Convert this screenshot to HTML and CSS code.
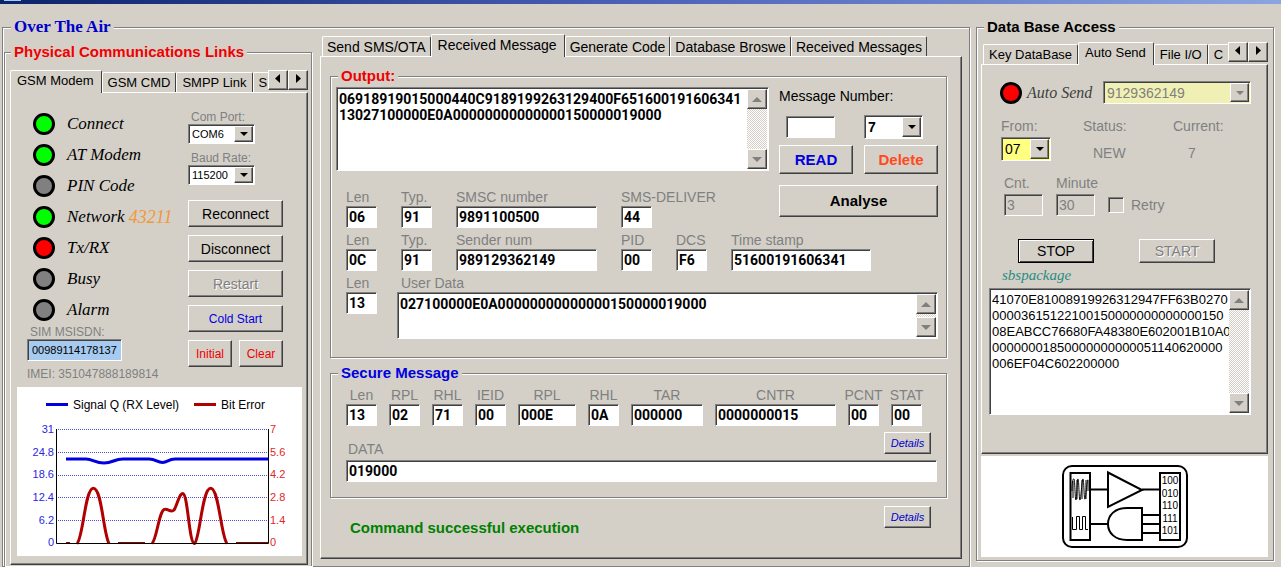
FILE: index.html
```
<!DOCTYPE html>
<html lang="en">
<head>
    <meta charset="UTF-8">
    <meta name="viewport" content="width=device-width, initial-scale=1.0">
    <title>Over The Air</title>
    <link rel="stylesheet" href="styles.css">
</head>
<body>
    <div class="titlebar"><span class="titlebar-icon"></span></div>
    <main class="app">
        <fieldset class="group ota">
            <legend class="legend-ota">Over The Air</legend>

            <fieldset class="group links">
                <legend class="legend-red">Physical Communications Links</legend>
                <div class="tabs tabs-small">
                    <div class="tab-list" role="tablist">
                        <button class="tab selected" role="tab">GSM Modem</button>
                        <button class="tab" role="tab">GSM CMD</button>
                        <button class="tab" role="tab">SMPP Link</button>
                        <button class="tab" role="tab">S</button>
                    </div>
                    <button class="spin" aria-label="Scroll tabs left"><svg width="8" height="10"><path d="M6 0v9L1 4.500z"/></svg></button>
                    <button class="spin" aria-label="Scroll tabs right"><svg width="8" height="10"><path d="M2 0v9l5-4.500z"/></svg></button>
                </div>
                <div class="page">
                    <div class="modem">
                        <div class="modem-status">
                            <ul class="led-list">
                                <li><span class="led green"></span>Connect</li>
                                <li><span class="led green"></span>AT Modem</li>
                                <li><span class="led"></span>PIN Code</li>
                                <li><span class="led green"></span>Network <span class="network-id">43211</span></li>
                                <li><span class="led red"></span>Tx/RX</li>
                                <li><span class="led"></span>Busy</li>
                                <li><span class="led"></span>Alarm</li>
                            </ul>
                            <label class="small-label" for="msisdn">SIM MSISDN:</label>
                            <input class="msisdn" id="msisdn" type="text" value="00989114178137">
                            <p class="imei">IMEI: 351047888189814</p>
                        </div>
                        <div class="modem-actions">
                            <label class="small-label" for="com-port">Com Port:</label>
                            <div class="combo combo-small">
                                <select id="com-port"><option>COM6</option></select><span class="arrow"></span>
                            </div>
                            <label class="small-label" for="baud-rate">Baud Rate:</label>
                            <div class="combo combo-small">
                                <select id="baud-rate"><option>115200</option></select><span class="arrow"></span>
                            </div>
                            <div class="modem-buttons">
                                <button class="btn wide">Reconnect</button>
                                <button class="btn wide">Disconnect</button>
                                <button class="btn wide" disabled>Restart</button>
                                <button class="btn wide small blue">Cold Start</button>
                                <button class="btn small red-text">Initial</button>
                                <button class="btn small red-text">Clear</button>
                            </div>
                        </div>
                    </div>
                    <svg class="chart" viewBox="0 0 285 169" role="img" aria-label="Signal quality and bit error">
                        <g class="chart-legend">
                            <path class="signal" d="M29 17.500h22"/>
                            <text x="56" y="22">Signal Q (RX Level)</text>
                            <path class="error" d="M177 17.500h22"/>
                            <text x="204" y="22">Bit Error</text>
                        </g>
                        <path class="grid" d="M41 42.500H250M41 65.500H250M41 88.500H250M41 110.500H250M41 133.500H250"/>
                        <g class="axis-signal">
                            <text x="37" y="46">31</text>
                            <text x="37" y="69">24.8</text>
                            <text x="37" y="91">18.6</text>
                            <text x="37" y="114">12.4</text>
                            <text x="37" y="137">6.2</text>
                            <text x="37" y="159">0</text>
                        </g>
                        <g class="axis-error">
                            <text x="253" y="46">7</text>
                            <text x="253" y="69">5.6</text>
                            <text x="253" y="91">4.2</text>
                            <text x="253" y="114">2.8</text>
                            <text x="253" y="137">1.4</text>
                            <text x="253" y="159">0</text>
                        </g>
                        <path class="error" d="M60 156.500C66 152 68 101.300 76.300 101.300C85 101.300 86 145 92 156.500M135 156.500C140 152 142 122.500 148 122.300C152 122 154 126 157 123C160 119 162 106.500 166 106.600C171 108 172 156.500 177.500 156.500C183 152 185 101.300 193.700 101.300C202 101.300 204 150 210 156.500"/>
                        <path class="error-base" d="M49 156H53M60 156H61M101 156H128M219 156H251"/>
                        <path class="signal" d="M49 72H69C76 72 78 76 87 76C96 76 97 72 106 72H132C139 72 140 75.500 145.500 75.500C151 75.500 151 72 158 72H251"/>
                        <path class="axis" d="M39.500 42V156.500H251.500V42"/>
                    </svg>
                </div>
            </fieldset>

            <section class="messages">
                <div class="tabs tabs-indent">
                    <div class="tab-list" role="tablist">
                        <button class="tab" role="tab">Send SMS/OTA</button>
                        <button class="tab selected" role="tab">Received Message</button>
                        <button class="tab" role="tab">Generate Code</button>
                        <button class="tab" role="tab">Database Broswe</button>
                        <button class="tab" role="tab">Received Messages</button>
                    </div>
                </div>
                <div class="page message-page">
                    <fieldset class="group output">
                        <legend class="legend-inner red-text">Output:</legend>
                        <div class="output-top">
                            <div>
                                <div class="memo memo-output">
                                    <textarea aria-label="Output">06918919015000440C9189199263129400F651600191606341
13027100000E0A00000000000000150000019000</textarea>
                                    <div class="scroll"><span class="scroll-btn up"></span><span class="scroll-btn down"></span></div>
                                </div>
                                <div class="fields sms-fields">
                                    <div class="field"><label for="smsc-len">Len</label><input id="smsc-len" type="text" value="06"></div>
                                    <div class="field"><label for="smsc-typ">Typ.</label><input id="smsc-typ" type="text" value="91"></div>
                                    <div class="field"><label for="smsc">SMSC number</label><input id="smsc" type="text" value="9891100500"></div>
                                    <div class="field"><label for="deliver">SMS-DELIVER</label><input id="deliver" type="text" value="44"></div>
                                </div>
                            </div>
                            <div class="reader">
                                <label class="reader-label" for="msg-number">Message Number:</label>
                                <div class="reader-number"><input id="msg-number" type="text"></div>
                                <div class="combo combo-number">
                                    <select aria-label="Message slot"><option>7</option></select><span class="arrow"></span>
                                </div>
                                <button class="btn bold blue">READ</button>
                                <button class="btn bold orange">Delete</button>
                                <button class="btn bold analyse">Analyse</button>
                            </div>
                        </div>
                        <div class="fields sms-fields">
                            <div class="field"><label for="sender-len">Len</label><input id="sender-len" type="text" value="0C"></div>
                            <div class="field"><label for="sender-typ">Typ.</label><input id="sender-typ" type="text" value="91"></div>
                            <div class="field"><label for="sender">Sender num</label><input id="sender" type="text" value="989129362149"></div>
                            <div class="field"><label for="pid">PID</label><input id="pid" type="text" value="00"></div>
                            <div class="field"><label for="dcs">DCS</label><input id="dcs" type="text" value="F6"></div>
                            <div class="field"><label for="stamp">Time stamp</label><input id="stamp" type="text" value="51600191606341"></div>
                        </div>
                        <div class="fields user-fields">
                            <div class="field"><label for="data-len">Len</label><input id="data-len" type="text" value="13"></div>
                            <div class="field">
                                <label class="user-label" for="user-data">User Data</label>
                                <div class="memo memo-user">
                                    <textarea id="user-data">027100000E0A00000000000000150000019000</textarea>
                                    <div class="scroll"><span class="scroll-btn up"></span><span class="scroll-btn down"></span></div>
                                </div>
                            </div>
                        </div>
                    </fieldset>

                    <fieldset class="group secure">
                        <legend class="legend-inner blue">Secure Message</legend>
                        <div class="fields secure-fields">
                            <div class="field"><label for="s-len">Len</label><input id="s-len" type="text" value="13"></div>
                            <div class="field"><label for="s-rpl">RPL</label><input id="s-rpl" type="text" value="02"></div>
                            <div class="field"><label for="s-rhl">RHL</label><input id="s-rhl" type="text" value="71"></div>
                            <div class="field"><label for="s-ieid">IEID</label><input id="s-ieid" type="text" value="00"></div>
                            <div class="field"><label for="s-rpl2">RPL</label><input id="s-rpl2" type="text" value="000E"></div>
                            <div class="field"><label for="s-rhl2">RHL</label><input id="s-rhl2" type="text" value="0A"></div>
                            <div class="field"><label for="s-tar">TAR</label><input id="s-tar" type="text" value="000000"></div>
                            <div class="field"><label for="s-cntr">CNTR</label><input id="s-cntr" type="text" value="0000000015"></div>
                            <div class="field"><label for="s-pcnt">PCNT</label><input id="s-pcnt" type="text" value="00"></div>
                            <div class="field"><label for="s-stat">STAT</label><input id="s-stat" type="text" value="00"></div>
                        </div>
                        <div class="data-head">
                            <label for="s-data">DATA</label>
                            <button class="btn details">Details</button>
                        </div>
                        <div class="data-row"><input id="s-data" type="text" value="019000"></div>
                    </fieldset>

                    <div class="result">
                        <p>Command successful execution</p>
                        <button class="btn details">Details</button>
                    </div>
                </div>
            </section>
        </fieldset>

        <fieldset class="group database">
            <legend class="legend-db">Data Base Access</legend>
            <div class="tabs tabs-small tabs-indent">
                <div class="tab-list" role="tablist">
                    <button class="tab" role="tab">Key DataBase</button>
                    <button class="tab selected" role="tab">Auto Send</button>
                    <button class="tab" role="tab">File I/O</button>
                    <button class="tab" role="tab">C</button>
                </div>
                <button class="spin" aria-label="Scroll tabs left"><svg width="8" height="10"><path d="M6 0v9L1 4.500z"/></svg></button>
                <button class="spin" aria-label="Scroll tabs right"><svg width="8" height="10"><path d="M2 0v9l5-4.500z"/></svg></button>
            </div>
            <div class="page send-page">
                <div class="auto-send">
                    <span class="led red"></span>
                    <label for="auto-number">Auto Send</label>
                    <div class="combo combo-disabled">
                        <select id="auto-number" disabled><option>9129362149</option></select><span class="arrow"></span>
                    </div>
                </div>
                <div class="send-status">
                    <label for="from">From:</label>
                    <span>Status:</span>
                    <span>Current:</span>
                    <div class="combo combo-from">
                        <select id="from"><option>07</option></select><span class="arrow"></span>
                    </div>
                    <output class="state">NEW</output>
                    <output class="current">7</output>
                </div>
                <div class="timing">
                    <div class="timing-field"><label for="cnt">Cnt.</label><input id="cnt" type="text" value="3" disabled></div>
                    <div class="timing-field"><label for="minute">Minute</label><input id="minute" type="text" value="30" disabled></div>
                    <label class="retry"><input type="checkbox" disabled>Retry</label>
                </div>
                <div class="send-buttons">
                    <button class="btn default">STOP</button>
                    <button class="btn" disabled>START</button>
                </div>
                <label class="package-label" for="package">sbspackage</label>
                <div class="memo memo-package">
                    <textarea id="package">41070E81008919926312947FF63B0270
00003615122100150000000000000150
08EABCC76680FA48380E602001B10A0
00000001850000000000051140620000
006EF04C602200000</textarea>
                    <div class="scroll"><span class="scroll-btn up"></span><span class="scroll-btn down"></span></div>
                </div>
            </div>
            <div class="logo">
                <svg width="126" height="84" viewBox="0 0 126 84" role="img" aria-label="Modem logo">
                    <rect class="card" x="1" y="1" width="124" height="81" rx="9"/>
                    <path class="frame" d="M8.500 8H28V75H8.500zM98 8H118V75H98z"/>
                    <path class="gate" d="M46 7.500L80 25L46 42zM80 43H65C53 43 46 50 46 59S53 75 65 75H80z"/>
                    <path class="wire" d="M28 24.500H46M80 24.500H98M28 59H46M80 50H98M80 59H98M80 68H98"/>
                    <path class="wave" d="M10 26C10 17 11 13 12 14S13 36 14 35S15 13 16 14S17 36 18 35S20 13 21 14S22 36 23 34S25 13 26 15V26M11 16V33M15 15V34M20 15V34M24 15V34"/>
                    <path class="square" d="M10.500 52V64.500H14.500V51.500H17.500V64.500H20.500V51.500H23.500V64.500H26"/>
                    <g class="bits">
                        <text x="108" y="19">100</text>
                        <text x="108" y="32">010</text>
                        <text x="108" y="44">110</text>
                        <text x="108" y="57">111</text>
                        <text x="108" y="69">101</text>
                    </g>
                </svg>
            </div>
        </fieldset>
    </main>
</body>
</html>
```
FILE: styles.css
```
* {
    box-sizing: border-box;
}
body {
    margin: 0;
    min-height: 100vh;
    display: flex;
    flex-direction: column;
    background: #d4d0c8;
    color: #000;
    font-family: "Liberation Sans", Arial, sans-serif;
    font-size: 14px;
    line-height: 14px;
}
button, input, select, textarea {
    font: inherit;
    color: inherit;
    margin: 0;
    padding: 0;
    border-radius: 0;
}
p, ul {
    margin: 0;
    padding: 0;
}
.titlebar {
    height: 4px;
    padding-left: 4px;
    background: linear-gradient(to right, #0a246a, #4a62b8 50%, #8aa6e0);
}
.titlebar-icon {
    display: block;
    width: 17px;
    height: 1px;
    background: #a6caf0;
}
.app {
    flex: 1;
    display: grid;
    grid-template-columns: minmax(0, 1fr) 298px;
    gap: 6px;
    padding: 15px 7px 0 2px;
}

/* group boxes */
.group {
    margin: 0;
    min-width: 0;
    border: 1px solid #808080;
    box-shadow: 1px 1px 0 #fff, inset 1px 1px 0 #fff;
}
.group > legend {
    background: #d4d0c8;
    padding: 0 3px;
    font-weight: bold;
}
.ota {
    display: flex;
    gap: 8px;
    padding: 0 7px 0 1px;
}
.group > .legend-ota {
    margin-left: 7px;
    font-family: "Liberation Serif", serif;
    font-size: 17px;
    line-height: 16px;
    color: #00c;
}
.group > .legend-red {
    margin-left: 1px;
    font-size: 15px;
    line-height: 16px;
    color: #f00000;
}
.group > .legend-db {
    margin-left: 3px;
    font-size: 15px;
    line-height: 16px;
}
.group > .legend-inner {
    margin-left: 2px;
    font-size: 15px;
}
.links {
    display: flex;
    flex-direction: column;
    flex: none;
    width: 308px;
    margin-top: 9px;
    padding: 10px 3px 1px 5px;
    border-bottom: none;
}

/* tabs */
.tabs {
    display: flex;
    align-items: flex-start;
    height: 23px;
    margin-bottom: -1px;
}
.tabs-small {
    font-size: 13px;
}
.tabs-indent {
    padding-left: 2px;
}
.tab-list {
    flex: 1;
    min-width: 0;
    display: flex;
    align-items: flex-end;
    height: 23px;
    overflow: hidden;
}
.tab {
    flex: none;
    height: 20px;
    margin-bottom: 1px;
    padding: 0 4px;
    border: 1px solid;
    border-color: #fff #404040 transparent #fff;
    border-bottom: none;
    border-radius: 2px 2px 0 0;
    background: #d4d0c8;
}
.tabs-small .tab {
    padding: 0 5px;
}
.tab.selected {
    position: relative;
    height: 23px;
    margin-bottom: 0;
    padding: 0 7px 2px 6px;
}
.spin {
    flex: none;
    width: 20px;
    height: 20px;
    border: 1px solid;
    border-color: #fff #404040 #404040 #fff;
    box-shadow: inset -1px -1px 0 #808080;
    background: #d4d0c8;
}
.page {
    flex: 1;
    border: 1px solid;
    border-color: #fff #404040 #404040 #fff;
    box-shadow: inset -1px -1px 0 #808080;
}

/* buttons */
.btn {
    height: 27px;
    border: 1px solid;
    border-color: #fff #404040 #404040 #fff;
    box-shadow: inset -1px -1px 0 #808080;
    background: #d4d0c8;
    color: #000;
    white-space: nowrap;
}
.btn:disabled {
    color: #808080;
    text-shadow: 1px 1px 0 #fff;
}
.btn.small {
    font-size: 12px;
}
.btn.bold {
    height: 29px;
    font-size: 15px;
    font-weight: bold;
}
.btn.details {
    width: 47px;
    height: 22px;
    font-size: 11px;
    font-style: italic;
    color: #00c;
}
.btn.default {
    border-color: #000;
    box-shadow: inset 1px 1px 0 #fff, inset -1px -1px 0 #404040;
}
.btn.blue, .group > .blue {
    color: #0000e0;
}
.btn.orange {
    color: #ff4a1c;
}
.btn.red-text, .group > .red-text {
    color: #f00000;
}

/* text boxes */
input[type="text"] {
    display: block;
    width: 100%;
    height: 22px;
    padding: 0 2px;
    border: 1px solid;
    border-color: #808080 #fff #fff #808080;
    box-shadow: inset 1px 1px 0 #404040;
    background: #fff;
    font-family: Roboto, "Liberation Sans", sans-serif;
    font-weight: bold;
}
input[type="text"]:disabled {
    background: #d4d0c8;
    color: #808080;
    font-weight: normal;
}
.combo {
    display: flex;
    border: 1px solid;
    border-color: #808080 #fff #fff #808080;
    box-shadow: inset 1px 1px 0 #404040;
    background: #fff;
    padding: 1px;
}
.combo select {
    appearance: none;
    flex: 1;
    min-width: 0;
    padding: 0 2px;
    border: none;
    background: transparent;
    opacity: 1;
}
.arrow {
    flex: none;
    display: flex;
    align-items: center;
    justify-content: center;
    width: 19px;
    border: 1px solid;
    border-color: #fff #404040 #404040 #fff;
    box-shadow: inset -1px -1px 0 #808080;
    background: #d4d0c8;
}
.arrow::before {
    content: '';
    border: 4px solid transparent;
    border-top-color: #000;
    border-bottom: none;
}
.memo {
    display: flex;
    border: 1px solid;
    border-color: #808080 #fff #fff #808080;
    box-shadow: inset 1px 1px 0 #404040;
    background: #fff;
    padding: 1px;
}
.memo textarea {
    flex: 1;
    min-width: 0;
    padding: 2px 0 0 1px;
    border: none;
    resize: none;
    overflow: hidden;
    white-space: pre;
    background: transparent;
    line-height: 16px;
    font-family: Roboto, "Liberation Sans", sans-serif;
    font-weight: bold;
}
.scroll {
    flex: none;
    display: flex;
    flex-direction: column;
    justify-content: space-between;
    width: 20px;
    background: repeating-conic-gradient(#fff 0 25%, #d4d0c8 0 50%) 0 0 / 2px 2px;
}
.scroll-btn {
    display: flex;
    align-items: center;
    justify-content: center;
    height: 20px;
    border: 1px solid;
    border-color: #fff #404040 #404040 #fff;
    box-shadow: inset -1px -1px 0 #808080;
    background: #d4d0c8;
}
.scroll-btn::before {
    content: '';
    border: 5px solid transparent;
}
.up::before {
    border-bottom-color: #808080;
    border-top: none;
}
.down::before {
    border-top-color: #808080;
    border-bottom: none;
}

/* modem page */
.modem {
    display: flex;
    justify-content: space-between;
    padding: 15px 24px 6px 16px;
}
.led-list {
    list-style: none;
    padding-left: 6px;
    font-family: "Liberation Serif", serif;
    font-size: 17px;
    font-style: italic;
}
.led-list li {
    display: flex;
    align-items: center;
    height: 31px;
    white-space: pre;
}
.led {
    flex: none;
    width: 22px;
    height: 22px;
    margin-right: 12px;
    border: 3px solid #000;
    border-radius: 50%;
    background: #808080;
}
.led.green {
    background: #00ff00;
}
.led.red {
    background: #ff0000;
}
.network-id {
    font-size: 18px;
    color: #f0983c;
}
.small-label {
    display: block;
    padding-left: 3px;
    font-size: 12px;
    color: #808080;
}
.modem-status .msisdn {
    width: 95px;
    padding: 0 4px;
    background: #a6caf0;
    font-family: "Liberation Sans", Arial, sans-serif;
    font-size: 11px;
    font-weight: normal;
}
.imei {
    padding-top: 6px;
    font-size: 12px;
    color: #808080;
}
.modem-actions {
    width: 95px;
    padding-top: 2px;
}
.combo-small {
    width: 67px;
    height: 20px;
    margin-bottom: 7px;
    font-size: 11px;
}
.modem-buttons {
    display: grid;
    grid-template-columns: 1fr 1fr;
    gap: 8px 7px;
    padding-top: 8px;
}
.modem-buttons .wide {
    grid-column: span 2;
}
.chart {
    display: block;
    margin: 0 5px 0 6px;
    background: #fff;
}
.chart path {
    fill: none;
}
.chart .signal {
    stroke: #0000e0;
    stroke-width: 3;
}
.chart .error {
    stroke: #b00000;
    stroke-width: 3;
}
.chart .error-base {
    stroke: #900000;
    stroke-width: 2;
}
.chart .grid {
    stroke: #5050e0;
    stroke-dasharray: 1 1;
}
.chart .axis {
    stroke: #000;
}
.chart-legend {
    font-size: 12px;
}
.axis-signal {
    font-size: 11px;
    fill: #2828e0;
    text-anchor: end;
}
.axis-error {
    font-size: 11px;
    fill: #e02828;
}

/* received message page */
.messages {
    flex: 1;
    min-width: 0;
    display: flex;
    flex-direction: column;
    padding-bottom: 7px;
    margin-top: -1px;
}
.message-page {
    padding: 12px 14px 0 9px;
}
.output {
    padding: 4px 8px 18px 5px;
}
.output-top {
    display: grid;
    grid-template-columns: minmax(0, 1fr) 159px;
    gap: 10px;
}
.memo-output {
    height: 84px;
    margin-bottom: 19px;
}
.fields {
    display: grid;
    padding-left: 10px;
    color: #808080;
}
.sms-fields {
    grid-template-columns: 31px 31px 141px 31px 31px 140px;
    gap: 24px;
    margin-bottom: 5px;
}
.output-top .sms-fields {
    grid-template-columns: 31px 31px 141px 31px;
}
.user-fields {
    grid-template-columns: 31px minmax(0, 1fr);
    gap: 20px;
}
.secure-fields {
    grid-template-columns: repeat(4, 31px) 58px 31px 72px 121px 31px 31px;
    gap: 12px;
}
.field {
    min-width: 0;
}
.field label {
    display: flex;
    margin-bottom: 2px;
    white-space: nowrap;
}
.secure-fields label {
    justify-content: center;
}
.field input, .field textarea, .data-row input {
    color: #000;
}
.field .user-label {
    padding-left: 4px;
}
.memo-user {
    height: 47px;
}
.reader {
    display: grid;
    grid-template-columns: 74px 74px;
    justify-content: space-between;
    align-content: start;
    row-gap: 6px;
    padding-top: 2px;
}
.reader-label {
    grid-column: span 2;
    margin-bottom: 6px;
}
.reader-number {
    padding: 1px 18px 0 7px;
}
.combo-number {
    width: 59px;
    height: 24px;
    font-weight: bold;
}
.btn.analyse {
    grid-column: span 2;
    height: 32px;
    margin-top: 5px;
}
.secure {
    margin-top: 8px;
    padding: 8px 9px 15px 5px;
}
.data-head {
    display: flex;
    justify-content: space-between;
    height: 24px;
    margin: 6px 6px 4px 12px;
}
.data-head label {
    align-self: flex-end;
    color: #808080;
}
.data-row {
    padding-left: 10px;
}
.result {
    display: flex;
    justify-content: space-between;
    padding: 8px 16px 0 20px;
}
.result p {
    padding-top: 15px;
    font-size: 15px;
    font-weight: bold;
    color: #008000;
}

/* data base access */
.database {
    display: flex;
    flex-direction: column;
    margin-bottom: 6px;
    padding: 7px 5px 3px 4px;
}
.send-page {
    padding: 16px 16px 0 7px;
    color: #808080;
}
.auto-send {
    display: flex;
    align-items: center;
    padding-left: 11px;
}
.auto-send .led {
    margin-right: 5px;
}
.auto-send label {
    font-family: "Liberation Serif", serif;
    font-size: 16px;
    font-style: italic;
    color: #404040;
}
.combo-disabled {
    width: 148px;
    height: 23px;
    margin-left: auto;
    background: #f0f0b4;
}
.combo-disabled .arrow::before {
    border-top-color: #808080;
}
.send-status {
    display: grid;
    grid-template-columns: 82px 90px 1fr;
    row-gap: 4px;
    padding: 15px 0 0 12px;
}
.combo-from {
    width: 50px;
    height: 24px;
    background: #ffff80;
    color: #000;
}
.state {
    padding: 9px 0 0 10px;
}
.current {
    padding: 9px 0 0 15px;
}
.timing {
    display: flex;
    gap: 13px;
    padding: 15px 0 0 15px;
}
.timing-field {
    width: 39px;
}
.timing-field label {
    display: block;
    margin-bottom: 4px;
    white-space: nowrap;
}
.timing-field input[type="text"] {
    font-family: inherit;
}
.retry {
    display: flex;
    align-items: center;
    align-self: flex-end;
    gap: 7px;
    height: 22px;
}
.retry input {
    appearance: none;
    width: 16px;
    height: 16px;
    border: 1px solid;
    border-color: #808080 #fff #fff #808080;
    box-shadow: inset 1px 1px 0 #404040;
}
.send-buttons {
    display: flex;
    gap: 45px;
    padding: 23px 0 3px 29px;
}
.send-buttons .btn {
    width: 76px;
    height: 24px;
}
.package-label {
    display: block;
    padding-left: 13px;
    font-family: "Liberation Serif", serif;
    font-size: 15px;
    font-style: italic;
    line-height: 18px;
    color: #2a8c80;
}
.memo-package {
    height: 127px;
    margin-top: 4px;
}
.memo-package textarea {
    font-family: "Liberation Sans", Arial, sans-serif;
    font-size: 13px;
    font-weight: normal;
    color: #000;
}
.logo {
    display: flex;
    align-items: center;
    justify-content: center;
    height: 101px;
    margin-top: 2px;
    background: #fff;
}
.logo path, .logo rect {
    fill: none;
    stroke: #000;
    stroke-width: 2;
}
.logo .wave, .logo .square {
    stroke-width: 1;
}
.bits {
    font-size: 10px;
    text-anchor: middle;
}
```
